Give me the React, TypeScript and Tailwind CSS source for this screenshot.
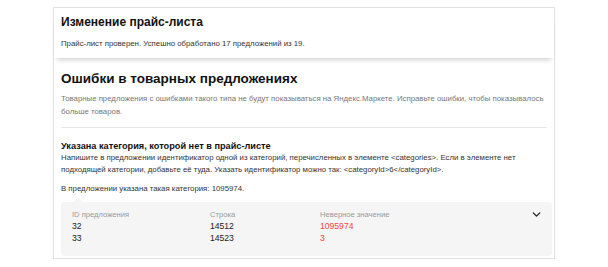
import { ChevronDown } from 'lucide-react'

const rows = [
  { id: '32', line: '14512', value: '1095974' },
  { id: '33', line: '14523', value: '3' },
]

export default function App() {
  return (
    <div className="h-[267px] w-[608px] bg-white pt-[7px] font-['Liberation_Sans',Arial,sans-serif] text-[#222]">
      <div className="mx-auto w-[502px] border border-[#e2e2e2]">
        {/* Header card */}
        <div className="px-[7px] pb-[9px] pt-[7px] shadow-[0_5px_5px_-3px_rgba(0,0,0,0.18)]">
          <h1 className="text-[12px] font-bold leading-[15px] text-[#111]">Изменение прайс-листа</h1>
          <p className="mt-[9px] text-[7.8px] leading-[10px] text-[#333]">
            Прайс-лист проверен. Успешно обработано 17 предложений из 19.
          </p>
        </div>

        {/* Errors */}
        <div className="pb-[2px] pl-[7px] pr-[2px] pt-[13px]">
          <h2 className="text-[13.5px] font-bold leading-[16px] text-[#111]">Ошибки в товарных предложениях</h2>
          <p className="mt-[5px] pr-[4px] text-[7.8px] leading-[13px] text-[#777]">
            Товарные предложения с ошибками такого типа не будут показываться на Яндекс.Маркете. Исправьте ошибки, чтобы показывалось больше товаров.
          </p>
          <div className="mr-[5px] mt-[9px] border-t border-[#e6e6e6]" />

          <h3 className="mt-[12px] text-[9.2px] font-bold leading-[12px] text-[#111]">
            Указана категория, которой нет в прайс-листе
          </h3>
          <p className="pr-[8px] text-[7.8px] leading-[12px] text-[#333]">
            Напишите в предложении идентификатор одной из категорий, перечисленных в элементе &lt;categories&gt;. Если в элементе нет подходящей категории, добавьте её туда. Указать идентификатор можно так: &lt;categoryId&gt;6&lt;/categoryId&gt;.
          </p>
          <p className="mt-[7px] text-[7.8px] leading-[12px] text-[#333]">
            В предложении указана такая категория: 1095974.
          </p>

          <div className="relative mt-[7px] rounded-[3px] bg-[#f5f5f5] pb-[12px] pl-[11px] pr-[12px] pt-[8px]">
            <span className="absolute -top-[5px] left-[12px] h-0 w-0 border-b-[5px] border-l-[5px] border-r-[5px] border-b-[#f5f5f5] border-l-transparent border-r-transparent" />
            <ChevronDown className="absolute right-[9px] top-[6px] text-[#222]" size={13} strokeWidth={2.5} />
            <div className="grid grid-cols-[138px_110px_1fr] text-[8.6px] leading-[12px]">
              <span className="text-[7.6px] leading-[10px] text-[#999]">ID предложения</span>
              <span className="text-[7.6px] leading-[10px] text-[#999]">Строка</span>
              <span className="text-[7.6px] leading-[10px] text-[#999]">Неверное значение</span>
              {rows.map((r) => (
                <div key={r.id} className="contents">
                  <span className="text-[#222]">{r.id}</span>
                  <span className="text-[#222]">{r.line}</span>
                  <span className="text-[#f44343]">{r.value}</span>
                </div>
              ))}
            </div>
          </div>
        </div>
      </div>
    </div>
  )
}
